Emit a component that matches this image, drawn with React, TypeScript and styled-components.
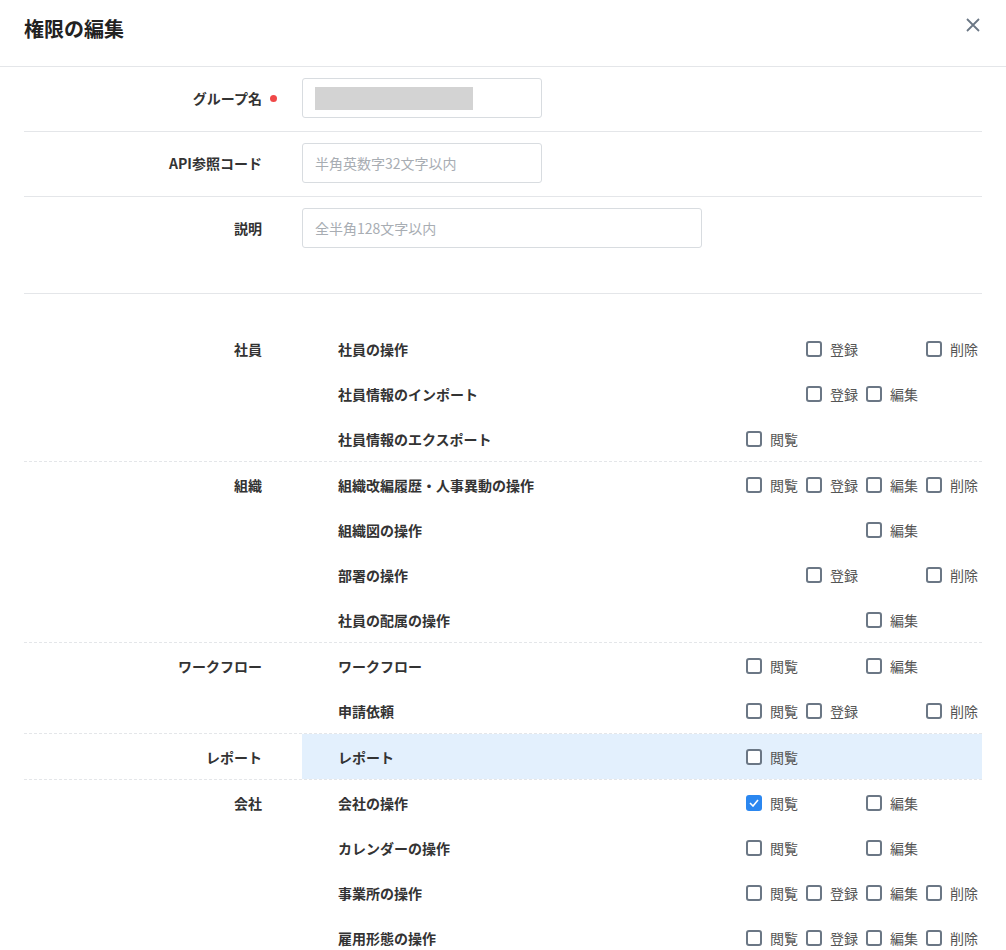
import * as React from 'react';
import styled, { createGlobalStyle } from 'styled-components';

const GlobalStyle = createGlobalStyle`
  body {
    margin: 0;
    background: #fff;
    font-family: "Noto Sans CJK JP", "Noto Sans", sans-serif;
    color: #333;
  }
`;

const Header = styled.div`
  height: 66px;
  border-bottom: 1px solid #e4e6e9;
  display: flex;
  align-items: center;
  justify-content: space-between;
  padding: 0 24px;
  box-sizing: content-box;
`;

const Title = styled.h1`
  margin: 0;
  font-size: 20px;
  font-weight: 700;
  color: #222;
  margin-top: -10px;
`;

const Close = styled.button`
  border: none;
  background: none;
  padding: 0;
  color: #6b7785;
  margin-top: -16px;
  margin-right: 2px;
  display: flex;
`;

const Body = styled.div`
  padding: 0 24px;
`;

const FormRow = styled.div<{ $last?: boolean }>`
  display: grid;
  grid-template-columns: 238px 1fr;
  column-gap: 40px;
  align-items: start;
  padding: 11px 0 ${({ $last }) => ($last ? '45px' : '13px')};
  border-bottom: 1px solid #e4e6e9;
`;

const FieldLabel = styled.div`
  height: 40px;
  display: flex;
  align-items: center;
  justify-content: flex-end;
  font-size: 14px;
  font-weight: 700;
  color: #333;
`;

const Required = styled.span`
  width: 7px;
  height: 7px;
  border-radius: 50%;
  background: #f04848;
  margin-left: 8px;
  margin-right: -15px;
`;

const Input = styled.div<{ $w: number }>`
  width: ${({ $w }) => $w}px;
  height: 40px;
  box-sizing: border-box;
  border: 1px solid #d8dce0;
  border-radius: 3px;
  display: flex;
  align-items: center;
  padding: 0 16px 0 12px;
  font-size: 14px;
  color: #a8adb3;
`;

const Masked = styled.span`
  width: 158px;
  height: 23px;
  background: #d3d3d3;
`;

const Perms = styled.div`
  padding-top: 32px;
`;

const Group = styled.div<{ $last?: boolean }>`
  display: grid;
  grid-template-columns: 238px 1fr;
  column-gap: 40px;
  border-bottom: ${({ $last }) => ($last ? 'none' : '1px dashed #e4e6e9')};
`;

const GroupLabel = styled.div`
  height: 45px;
  display: flex;
  align-items: center;
  justify-content: flex-end;
  font-size: 14px;
  font-weight: 700;
`;

const ItemRow = styled.div<{ $active?: boolean }>`
  height: 45px;
  display: flex;
  align-items: center;
  padding-left: 36px;
  background: ${({ $active }) => ($active ? '#e3f0fd' : 'transparent')};
`;

const ItemName = styled.div`
  flex: 1;
  font-size: 14px;
  font-weight: 700;
  color: #333;
`;

const Cols = styled.div`
  display: grid;
  grid-template-columns: repeat(4, 60px);
  margin-right: -4px;
`;

const Check = styled.label`
  display: flex;
  align-items: center;
  gap: 8px;
  font-size: 14px;
  color: #555;
`;

const Box = styled.span<{ $on?: boolean }>`
  width: 16px;
  height: 16px;
  box-sizing: border-box;
  border-radius: 3px;
  border: ${({ $on }) => ($on ? 'none' : '2px solid #6b7785')};
  background: ${({ $on }) => ($on ? '#2b87f0' : '#fff')};
  display: flex;
  align-items: center;
  justify-content: center;
`;

const LABELS = ['閲覧', '登録', '編集', '削除'];

type Item = { name: string; cols: string; checked?: number; active?: boolean };

const GROUPS: { label: string; items: Item[] }[] = [
  {
    label: '社員',
    items: [
      { name: '社員の操作', cols: '0101' },
      { name: '社員情報のインポート', cols: '0110' },
      { name: '社員情報のエクスポート', cols: '1000' },
    ],
  },
  {
    label: '組織',
    items: [
      { name: '組織改編履歴・人事異動の操作', cols: '1111' },
      { name: '組織図の操作', cols: '0010' },
      { name: '部署の操作', cols: '0101' },
      { name: '社員の配属の操作', cols: '0010' },
    ],
  },
  {
    label: 'ワークフロー',
    items: [
      { name: 'ワークフロー', cols: '1010' },
      { name: '申請依頼', cols: '1101' },
    ],
  },
  { label: 'レポート', items: [{ name: 'レポート', cols: '1000', active: true }] },
  {
    label: '会社',
    items: [
      { name: '会社の操作', cols: '1010', checked: 0 },
      { name: 'カレンダーの操作', cols: '1010' },
      { name: '事業所の操作', cols: '1111' },
      { name: '雇用形態の操作', cols: '1111' },
    ],
  },
];

const App = () => (
  <>
    <GlobalStyle />
    <Header>
      <Title>権限の編集</Title>
      <Close aria-label="close">
        <svg width="14" height="14" viewBox="0 0 14 14">
          <path d="M1 1L13 13M13 1L1 13" stroke="currentColor" strokeWidth="1.8" />
        </svg>
      </Close>
    </Header>
    <Body>
      <FormRow>
        <FieldLabel>
          グループ名<Required />
        </FieldLabel>
        <Input $w={240}>
          <Masked />
        </Input>
      </FormRow>
      <FormRow>
        <FieldLabel>API参照コード</FieldLabel>
        <Input $w={240}>半角英数字32文字以内</Input>
      </FormRow>
      <FormRow $last>
        <FieldLabel>説明</FieldLabel>
        <Input $w={400}>全半角128文字以内</Input>
      </FormRow>
      <Perms>
        {GROUPS.map((g, gi) => (
          <Group key={g.label} $last={gi === GROUPS.length - 1}>
            <GroupLabel>{g.label}</GroupLabel>
            <div>
              {g.items.map((it) => (
                <ItemRow key={it.name} $active={it.active}>
                  <ItemName>{it.name}</ItemName>
                  <Cols>
                    {LABELS.map((l, i) =>
                      it.cols[i] === '1' ? (
                        <Check key={l}>
                          <Box $on={it.checked === i}>
                            {it.checked === i && (
                              <svg width="10" height="8" viewBox="0 0 10 8">
                                <path d="M1 4l3 3 5-6" fill="none" stroke="#fff" strokeWidth="1.6" />
                              </svg>
                            )}
                          </Box>
                          {l}
                        </Check>
                      ) : (
                        <span key={l} />
                      )
                    )}
                  </Cols>
                </ItemRow>
              ))}
            </div>
          </Group>
        ))}
      </Perms>
    </Body>
  </>
);

export default App;
